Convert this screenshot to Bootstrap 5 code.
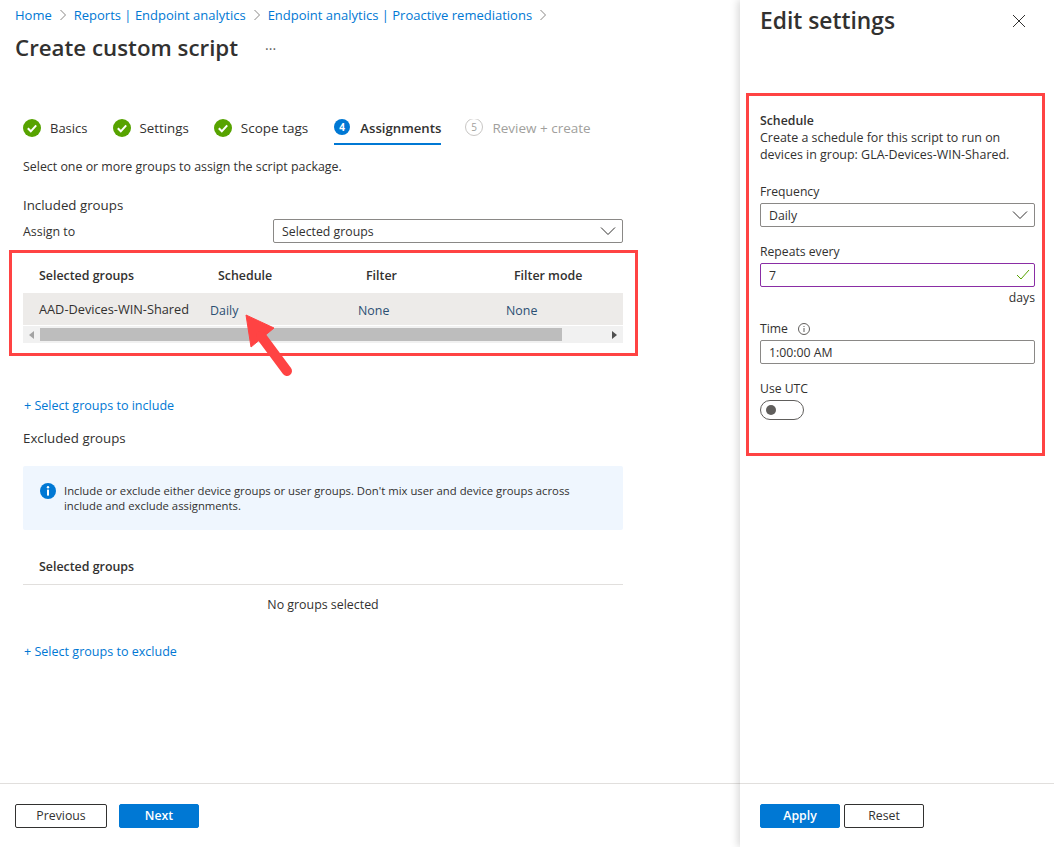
<!DOCTYPE html>
<html lang="en">
<head>
    <meta charset="UTF-8">
    <title>Create custom script</title>
    <link href="https://cdn.jsdelivr.net/npm/bootstrap@5.3.0/dist/css/bootstrap.min.css" rel="stylesheet">
    <style>
        html, body { height: 100%; }
        body {
            font-family: "Open Sans", "Liberation Sans", sans-serif;
            font-size: 12.4px;
            line-height: 18px;
            color: #323130;
            overflow: hidden;
        }
        a { color: #0078d4; text-decoration: none; }
        .page-wrap { height: 847px; }
        .main-pane { width: 740px; }
        .side-pane {
            width: 314px;
            box-shadow: -2px 0 8px rgba(0, 0, 0, .16);
            position: relative;
            font-size: 12.2px;
        }
        .pane-body { flex: 1 1 auto; }
        .pane-foot {
            height: 64px;
            border-top: 1px solid #e1dfdd;
            padding-top: 20px;
        }
        .crumbs { padding: 6px 0 0 15px; font-size: 13px; }
        .crumb-sep { margin: 0 7px; }
        .crumb-sep svg { display: block; }
        .page-title {
            font-size: 22.3px;
            line-height: 32px;
            font-weight: 600;
            margin: 8px 0 0 15px;
        }
        .more-dots { margin: 10px 0 0 27px; font-size: 14px; color: #605e5c; line-height: 18px; }
        .wizard-body { margin-left: 23px; width: 600px; }
        .step-row { margin-top: 48px; }
        .step-item {
            height: 33px;
            padding-top: 1px;
            margin-right: 25px;
            border-bottom: 2px solid transparent;
            gap: 9px;
            font-size: 13.3px;
        }
        .step-item:first-child { font-size: 13px; }
        .step-item:nth-child(3) { margin-right: 26px; font-size: 13.5px; }
        .step-item.current { border-bottom-color: #0078d4; font-weight: 600; gap: 10px; font-size: 13.2px; margin-right: 24px; }
        .step-item.todo { color: #a19f9d; font-size: 13.5px; }
        .intro-line { margin-top: 13px; }
        .sect-label { margin-top: 20px; font-size: 13.3px; }
        .assign-row { margin-top: 5px; }
        .assign-label { width: 250px; padding-top: 1px; }
        .fx-select, .fx-input {
            height: 24px;
            min-height: 24px;
            padding: 0 8px;
            font-size: 12.3px;
            line-height: 22px;
            color: #323130;
            border: 1px solid #8a8886;
            border-radius: 2px;
        }
        .fx-select {
            padding-top: 1px;
            background-image: url("data:image/svg+xml,%3csvg xmlns='http://www.w3.org/2000/svg' viewBox='0 0 16 16'%3e%3cpath fill='none' stroke='%23323130' d='M1 4.5l7 7 7-7'/%3e%3c/svg%3e");
            background-position: right 6px center;
            background-size: 16px 16px;
        }
        .callout-box { border: 3px solid #ff4343; }
        .table-box {
            margin: 7px -15px 0 -14px;
            padding: 0 12px 10px 11px;
            position: relative;
        }
        .group-table { table-layout: fixed; width: 600px; margin: 0; }
        .group-table th, .group-table td { border: 0; background: none; padding: 0 0 0 8px; }
        .group-table th { height: 40px; padding-top: 6px; font-weight: 600; vertical-align: middle; color: #323130; }
        .group-table th:first-child, .group-table td:first-child { padding-left: 16px; }
        .group-table td { height: 32px; padding-left: 0; padding-top: 3px; vertical-align: middle; color: #2b4f73; background: #edebe9; }
        .group-table td:first-child { color: #323130; font-size: 12.75px; padding-top: 0; }
        .col-name { width: 187px; }
        .col-other { width: 148px; }
        .fake-scroll { height: 17px; margin-top: 1px; background: #f1f1f1; }
        .scroll-thumb { width: 522px; height: 13px; background: #bdbdbd; }
        .scroll-end { width: 17px; }
        .red-arrow { position: absolute; left: 0; top: 0; width: 320px; height: 140px; pointer-events: none; }
        .add-include { margin: 41px 0 0 1px; display: block; font-size: 12.55px; }
        .excl-label { margin-top: 14px; font-size: 13.3px; }
        .info-strip {
            margin-top: 19px;
            height: 64px;
            background: #eff6fe;
            border-radius: 2px;
            padding: 17px 40px 0 17px;
            gap: 8px;
            font-size: 11.3px;
            line-height: 15px;
        }
        .info-strip svg { flex: none; }
        .sel-head { margin-top: 28px; padding: 0 0 8px 16px; border-bottom: 1px solid #e1dfdd; font-weight: 600; }
        .none-line { margin-top: 11px; }
        .add-exclude { margin: 29px 0 0 1px; display: block; font-size: 12.55px; }
        .foot-btn {
            height: 24px;
            padding: 0;
            font-size: 12.3px;
            line-height: 22px;
            font-weight: 600;
            border-radius: 2px;
        }
        .foot-blue { background: #0078d4; border: 1px solid #0078d4; color: #fff; width: 80px; }
        .foot-plain { background: #fff; border: 1px solid #323130; color: #323130; font-weight: 400; }
        .prev-btn { width: 92px; margin: 0 12px 0 15px; }
        .reset-btn { width: 80px; margin-left: 4px; }
        .apply-btn { margin-left: 20px; }
        .panel-top { padding: 5px 0 0 20px; }
        .panel-title { font-size: 22.8px; line-height: 32px; font-weight: 600; margin: 0; }
        .panel-close { margin: 9px 28px 0 0; background: none; border: 0; padding: 0; }
        .panel-close svg { display: block; }
        .settings-box {
            margin: 56px 9px 0 6px;
            padding: 16px 7px 33px 11px;
        }
        .desc-text { line-height: 17px; font-size: 12.45px; }
        .sched-head { font-weight: 600; line-height: 17px; font-size: 12.3px; }
        .fld-label { margin: 20px 0 2px; }
        .fld-label.tight { margin-top: 16px; }
        .fld-label.time-lbl { margin-top: 13px; gap: 10px; }
        .valid-wrap { position: relative; }
        .valid-wrap .fx-input { border-color: #8a2da5; }
        .valid-tick { position: absolute; right: 5px; top: 6px; }
        .unit-text { margin-top: 2px; }
        .toggle-off {
            width: 44px;
            height: 20px;
            border: 1px solid #605e5c;
            border-radius: 10px;
            padding-left: 5px;
        }
        .toggle-dot { width: 10px; height: 10px; border-radius: 50%; background: #605e5c; }
    </style>
</head>
<body>
    <div class="page-wrap d-flex">
        <!-- wizard -->
        <div class="main-pane d-flex flex-column">
            <div class="pane-body">
                <div class="crumbs d-flex align-items-center">
                    <a href="#">Home</a>
                    <span class="crumb-sep"><svg width="8" height="12" viewBox="0 0 8 12"><path d="M1.5 1l5 5-5 5" fill="none" stroke="#8a8886"/></svg></span>
                    <a href="#">Reports | Endpoint analytics</a>
                    <span class="crumb-sep"><svg width="8" height="12" viewBox="0 0 8 12"><path d="M1.5 1l5 5-5 5" fill="none" stroke="#8a8886"/></svg></span>
                    <a href="#">Endpoint analytics | Proactive remediations</a>
                    <span class="crumb-sep"><svg width="8" height="12" viewBox="0 0 8 12"><path d="M1.5 1l5 5-5 5" fill="none" stroke="#8a8886"/></svg></span>
                </div>
                <div class="d-flex align-items-center">
                    <h1 class="page-title">Create custom script</h1>
                    <span class="more-dots">···</span>
                </div>

                <div class="wizard-body">
                    <div class="step-row d-flex">
                        <div class="step-item d-flex align-items-center">
                            <svg width="18" height="18" viewBox="0 0 18 18"><circle cx="9" cy="9" r="9" fill="#57a300"/><path d="M4.8 9.3l3 3 5.4-6" fill="none" stroke="#fff" stroke-width="2"/></svg>
                            <span>Basics</span>
                        </div>
                        <div class="step-item d-flex align-items-center">
                            <svg width="18" height="18" viewBox="0 0 18 18"><circle cx="9" cy="9" r="9" fill="#57a300"/><path d="M4.8 9.3l3 3 5.4-6" fill="none" stroke="#fff" stroke-width="2"/></svg>
                            <span>Settings</span>
                        </div>
                        <div class="step-item d-flex align-items-center">
                            <svg width="18" height="18" viewBox="0 0 18 18"><circle cx="9" cy="9" r="9" fill="#57a300"/><path d="M4.8 9.3l3 3 5.4-6" fill="none" stroke="#fff" stroke-width="2"/></svg>
                            <span>Scope tags</span>
                        </div>
                        <div class="step-item current d-flex align-items-center">
                            <svg width="16" height="18" viewBox="0 0 16 18"><circle cx="8" cy="8" r="8" fill="#0078d4"/><text x="8" y="11.5" text-anchor="middle" font-size="10" font-weight="700" fill="#fff">4</text></svg>
                            <span>Assignments</span>
                        </div>
                        <div class="step-item todo d-flex align-items-center">
                            <svg width="18" height="18" viewBox="0 0 18 18"><circle cx="9" cy="8" r="8.5" fill="none" stroke="#c8c6c4"/><text x="9" y="11.5" text-anchor="middle" font-size="10" fill="#a19f9d">5</text></svg>
                            <span>Review + create</span>
                        </div>
                    </div>

                    <div class="intro-line">Select one or more groups to assign the script package.</div>
                    <div class="sect-label">Included groups</div>
                    <div class="assign-row d-flex align-items-center">
                        <div class="assign-label">Assign to</div>
                        <select class="form-select fx-select flex-grow-1 w-auto"><option>Selected groups</option></select>
                    </div>

                    <div class="callout-box table-box">
                        <table class="table group-table">
                            <colgroup><col class="col-name"><col class="col-other"><col class="col-other"><col></colgroup>
                            <thead>
                                <tr>
                                    <th>Selected groups</th>
                                    <th>Schedule</th>
                                    <th>Filter</th>
                                    <th>Filter mode</th>
                                </tr>
                            </thead>
                            <tbody>
                                <tr>
                                    <td>AAD-Devices-WIN-Shared</td>
                                    <td>Daily</td>
                                    <td>None</td>
                                    <td>None</td>
                                </tr>
                            </tbody>
                        </table>
                        <div class="fake-scroll d-flex align-items-center">
                            <div class="scroll-end d-flex justify-content-center">
                                <svg width="5" height="8" viewBox="0 0 5 8"><path d="M5 0L0 4l5 4z" fill="#a3a3a3"/></svg>
                            </div>
                            <div class="scroll-thumb"></div>
                            <div class="flex-grow-1"></div>
                            <div class="scroll-end d-flex justify-content-center">
                                <svg width="5" height="8" viewBox="0 0 5 8"><path d="M0 0l5 4-5 4z" fill="#505050"/></svg>
                            </div>
                        </div>
                        <svg class="red-arrow" viewBox="0 0 320 140">
                            <g transform="translate(-12 -253)">
                                <path d="M246 315l28 13-23 19z" fill="#ff4343" stroke="#ff4343" stroke-linejoin="round"/>
                                <path d="M261 336l26 35" fill="none" stroke="#ff4343" stroke-width="10" stroke-linecap="round"/>
                            </g>
                        </svg>
                    </div>

                    <a class="add-include" href="#">+ Select groups to include</a>
                    <div class="excl-label">Excluded groups</div>
                    <div class="info-strip d-flex">
                        <svg width="16" height="16" viewBox="0 0 16 16"><circle cx="8" cy="8" r="8" fill="#0078d4"/><circle cx="8" cy="4.3" r="1.2" fill="#fff"/><rect x="7" y="6.6" width="2" height="6" fill="#fff"/></svg>
                        <div>Include or exclude either device groups or user groups. Don't mix user and device groups across include and exclude assignments.</div>
                    </div>
                    <div class="sel-head">Selected groups</div>
                    <div class="none-line text-center">No groups selected</div>
                    <a class="add-exclude" href="#">+ Select groups to exclude</a>
                </div>
            </div>
            <div class="pane-foot d-flex align-items-start">
                <button type="button" class="btn foot-btn foot-plain prev-btn">Previous</button>
                <button type="button" class="btn foot-btn foot-blue">Next</button>
            </div>
        </div>

        <!-- edit settings panel -->
        <div class="side-pane d-flex flex-column">
            <div class="pane-body">
                <div class="panel-top d-flex justify-content-between align-items-start">
                    <h2 class="panel-title">Edit settings</h2>
                    <button type="button" class="panel-close" aria-label="Close">
                        <svg width="14" height="14" viewBox="0 0 14 14"><path d="M1 1l12 12M13 1L1 13" fill="none" stroke="#323130"/></svg>
                    </button>
                </div>
                <div class="callout-box settings-box">
                    <div class="sched-head">Schedule</div>
                    <div class="desc-text">Create a schedule for this script to run on devices in group: GLA-Devices-WIN-Shared.</div>

                    <div class="fld-label">Frequency</div>
                    <select class="form-select fx-select"><option>Daily</option></select>

                    <div class="fld-label tight">Repeats every</div>
                    <div class="valid-wrap">
                        <input class="form-control fx-input" type="text" value="7">
                        <svg class="valid-tick" width="14" height="12" viewBox="0 0 14 12"><path d="M1 6l4 4 8-9" fill="none" stroke="#57a300"/></svg>
                    </div>
                    <div class="unit-text text-end">days</div>

                    <div class="fld-label time-lbl d-flex align-items-center">
                        <span>Time</span>
                        <svg width="12" height="12" viewBox="0 0 12 12"><circle cx="6" cy="6" r="5.5" fill="none" stroke="#605e5c"/><rect x="5.5" y="5" width="1" height="4" fill="#605e5c"/><rect x="5.5" y="3" width="1" height="1" fill="#605e5c"/></svg>
                    </div>
                    <input class="form-control fx-input" type="text" value="1:00:00 AM">

                    <div class="fld-label tight">Use UTC</div>
                    <div class="toggle-off d-flex align-items-center"><span class="toggle-dot"></span></div>
                </div>
            </div>
            <div class="pane-foot d-flex align-items-start">
                <button type="button" class="btn foot-btn foot-blue apply-btn">Apply</button>
                <button type="button" class="btn foot-btn foot-plain reset-btn">Reset</button>
            </div>
        </div>
    </div>

    <script src="https://cdn.jsdelivr.net/npm/bootstrap@5.3.0/dist/js/bootstrap.bundle.min.js"></script>
</body>
</html>
